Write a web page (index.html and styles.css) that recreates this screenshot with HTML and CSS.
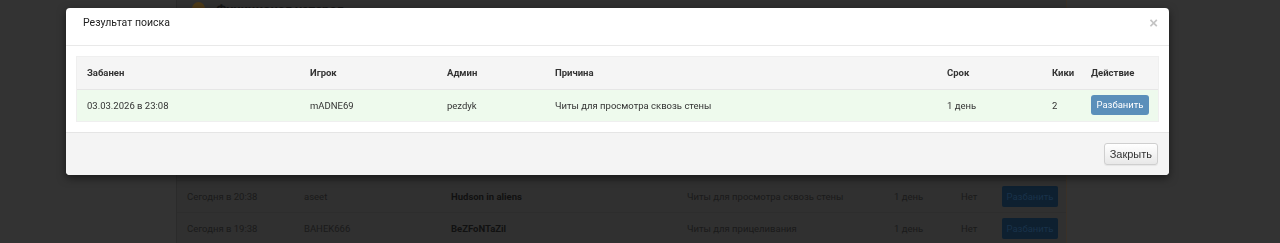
FILE: index.html
```html
<!DOCTYPE html>
<html lang="ru">
<head>
<meta charset="utf-8">
<title>Результат поиска</title>
<link rel="stylesheet" href="styles.css">
</head>
<body>
<div class="page">
  <div class="panel">
    <div class="panel-head">
      <span class="warn-icon"></span>
      <span class="panel-title">Функционал устарел</span>
    </div>
    <table class="bg-table">
      <colgroup>
        <col style="width:117px"><col style="width:147px"><col style="width:236px"><col style="width:207px"><col style="width:67px"><col style="width:41px"><col>
      </colgroup>
      <tr><td></td><td></td><td></td><td></td><td></td><td></td><td></td></tr>
      <tr><td></td><td></td><td></td><td></td><td></td><td></td><td></td></tr>
      <tr><td></td><td></td><td></td><td></td><td></td><td></td><td></td></tr>
      <tr><td></td><td></td><td></td><td></td><td></td><td></td><td></td></tr>
      <tr><td></td><td></td><td></td><td></td><td></td><td></td><td></td></tr>
      <tr><td>Сегодня в 20:38</td><td>aseet</td><td class="b">Hudson in aliens</td><td>Читы для просмотра сквозь стены</td><td>1 день</td><td>Нет</td><td><span class="bg-btn">Разбанить</span></td></tr>
      <tr><td>Сегодня в 19:38</td><td>BAHEK666</td><td class="b">BeZFoNTaZil</td><td>Читы для прицеливания</td><td>1 день</td><td>Нет</td><td><span class="bg-btn">Разбанить</span></td></tr>
    </table>
  </div>
</div>

<div class="modal">
  <div class="modal-header">
    <span class="modal-title">Результат поиска</span>
    <span class="modal-close">×</span>
  </div>
  <div class="modal-body">
    <table class="res-table">
      <colgroup>
        <col style="width:223px"><col style="width:137px"><col style="width:108px"><col style="width:392px"><col style="width:105px"><col style="width:39px"><col>
      </colgroup>
      <thead>
        <tr><th>Забанен</th><th>Игрок</th><th>Админ</th><th>Причина</th><th>Срок</th><th>Кики</th><th>Действие</th></tr>
      </thead>
      <tbody>
        <tr class="ok"><td>03.03.2026 в 23:08</td><td>mADNE69</td><td>pezdyk</td><td>Читы для просмотра сквозь стены</td><td>1 день</td><td>2</td><td><span class="unban">Разбанить</span></td></tr>
      </tbody>
    </table>
  </div>
  <div class="modal-footer">
    <span class="close-btn">Закрыть</span>
  </div>
</div>
</body>
</html>
```

FILE: styles.css
```css
html, body {
  margin: 0;
  padding: 0;
}
body {
  background: #333333;
  width: 1280px;
  height: 243px;
  overflow: hidden;
  font-family: Roboto, "Liberation Sans", sans-serif;
}
.page {
  padding-left: 176px;
}
.panel {
  width: 891px;
  background: #303030;
  border-left: 1px solid #2b2b2b;
  border-right: 1px solid #3a3128;
  height: 243px;
  box-sizing: border-box;
  overflow: hidden;
}
.panel-head {
  display: flex;
  align-items: flex-end;
  gap: 11px;
  padding-left: 15px;
  margin-top: -8px;
  height: 28px;
  box-sizing: border-box;
}
.warn-icon {
  width: 13px;
  height: 13px;
  border-radius: 50%;
  background: #4d3a18;
  margin-bottom: 5px;
}
.panel-title {
  font-size: 13px;
  font-weight: bold;
  color: #151515;
  line-height: 20px;
}
.bg-table {
  border-collapse: collapse;
  table-layout: fixed;
  width: 889px;
  font-size: 9.5px;
  color: #1a1a1a;
}
.bg-table td {
  height: 32px;
  padding: 0 0 0 10px;
  border-top: 1px solid #2d2d2d;
  box-sizing: border-box;
  white-space: nowrap;
  overflow: hidden;
}
.bg-table td.b {
  font-weight: bold;
  color: #111;
}
.bg-btn {
  display: inline-block;
  width: 56px;
  height: 21px;
  line-height: 21px;
  text-align: center;
  background: #0e2030;
  color: #19324a;
  border-radius: 2px;
  font-size: 9.5px;
}

.modal {
  position: fixed;
  left: 66px;
  top: 8px;
  width: 1103px;
  background: #fff;
  border-radius: 4px;
  box-shadow: 0 3px 9px rgba(0, 0, 0, 0.5);
  overflow: hidden;
}
.modal-header {
  height: 38px;
  box-sizing: border-box;
  border-bottom: 1px solid #e9e9e9;
  display: flex;
  justify-content: space-between;
  align-items: flex-start;
  padding: 7px 11px 0 17px;
}
.modal-title {
  font-size: 10.5px;
  line-height: 16px;
  color: #222;
}
.modal-close {
  font-size: 15px;
  line-height: 16px;
  font-weight: bold;
  color: #c4c4c4;
  font-family: "Liberation Sans", sans-serif;
}
.modal-body {
  padding: 11px;
}
.res-table {
  width: 1081px;
  border-collapse: collapse;
  table-layout: fixed;
  font-size: 9.5px;
  color: #333;
  outline: 1px solid #efefef;
}
.res-table th,
.res-table td {
  text-align: left;
  padding: 0 10px;
  height: 32px;
  box-sizing: border-box;
  white-space: nowrap;
}
.res-table th {
  background: #f5f5f5;
  font-weight: bold;
  border-bottom: 1px solid #e6e6e6;
}
.res-table tr.ok td {
  background: #eefaed;
}
.unban {
  display: inline-block;
  width: 58px;
  height: 20px;
  line-height: 20px;
  text-align: center;
  background: #5b8fba;
  color: #fff;
  border-radius: 3px;
  font-size: 9.5px;
}
.modal-footer {
  border-top: 1px solid #e5e5e5;
  background: #f4f4f4;
  height: 43px;
  box-sizing: border-box;
  display: flex;
  justify-content: flex-end;
  align-items: center;
  padding: 0 11px;
}
.close-btn {
  display: inline-block;
  height: 22px;
  line-height: 20px;
  box-sizing: border-box;
  padding: 0 5px;
  border: 1px solid #cfcfcf;
  border-radius: 3px;
  background: linear-gradient(#ffffff, #e8e8e8);
  box-shadow: 0 1px 1px rgba(0, 0, 0, 0.06);
  font-family: "Liberation Sans", sans-serif;
  font-size: 11px;
  color: #333;
}
```
